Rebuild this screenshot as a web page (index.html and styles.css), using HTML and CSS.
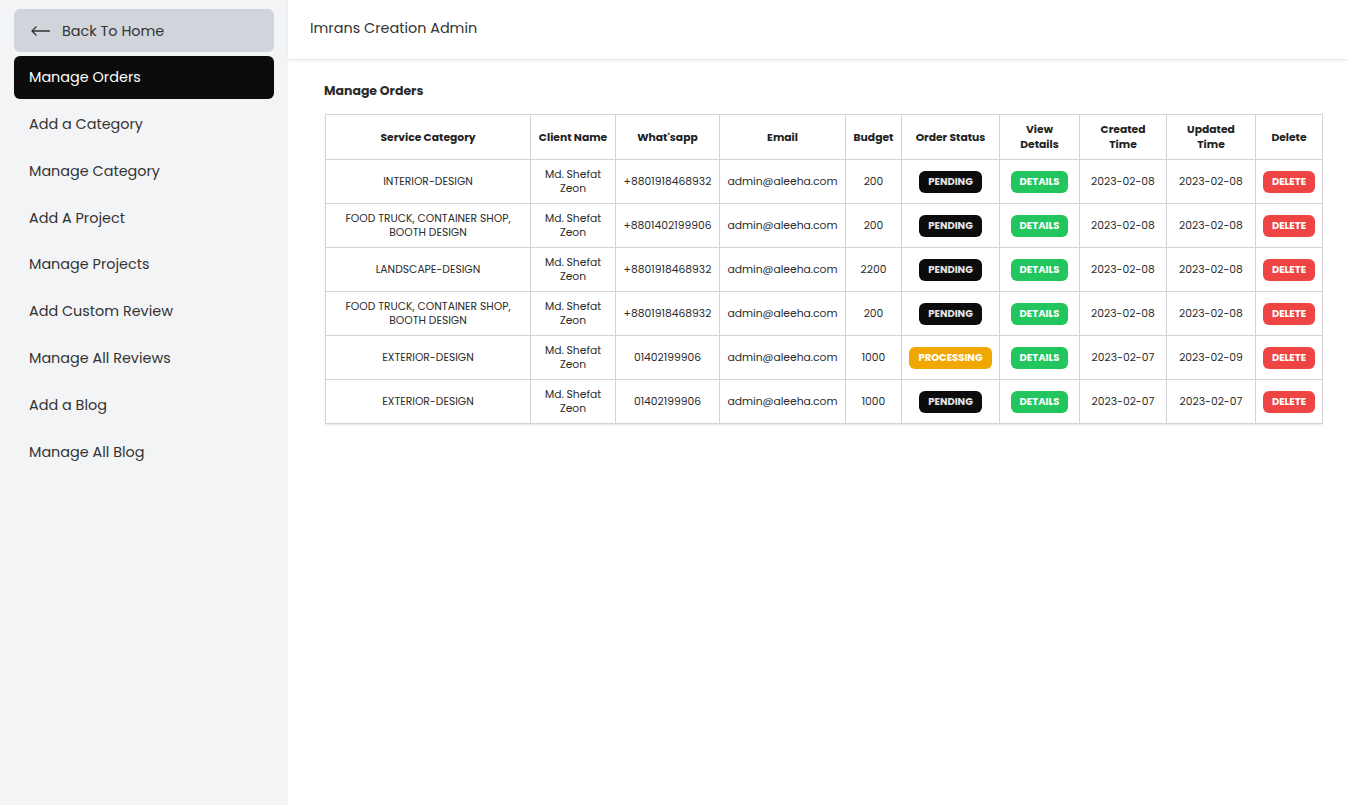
FILE: index.html
```html
<!DOCTYPE html>
<html>
<head>
<meta charset="utf-8">
<title>Imrans Creation Admin</title>
<link rel="stylesheet" href="styles.css">
</head>
<body>
<div class="layout">
  <aside class="sidebar">
    <a class="nav-item back">
      <svg class="back-icon" width="19" height="10" viewBox="0 0 19 10"><path d="M18.5 5H1M5 1L1 5l4 4" fill="none" stroke="#333" stroke-width="1.3" stroke-linecap="round" stroke-linejoin="round"/></svg>
      <span>Back To Home</span>
    </a>
    <a class="nav-item active">Manage Orders</a>
    <a class="nav-item">Add a Category</a>
    <a class="nav-item">Manage Category</a>
    <a class="nav-item">Add A Project</a>
    <a class="nav-item">Manage Projects</a>
    <a class="nav-item">Add Custom Review</a>
    <a class="nav-item">Manage All Reviews</a>
    <a class="nav-item">Add a Blog</a>
    <a class="nav-item">Manage All Blog</a>
  </aside>
  <div class="main">
    <header class="topbar">Imrans Creation Admin</header>
    <section class="content">
      <h2 class="page-title">Manage Orders</h2>
      <div class="table-wrap">
        <table class="orders">
          <thead>
            <tr>
              <th class="c-cat">Service Category</th>
              <th class="c-name">Client Name</th>
              <th class="c-wa">What'sapp</th>
              <th class="c-mail">Email</th>
              <th class="c-bud">Budget</th>
              <th class="c-status">Order Status</th>
              <th class="c-view">View<br>Details</th>
              <th class="c-date">Created<br>Time</th>
              <th class="c-upd">Updated<br>Time</th>
              <th class="c-del">Delete</th>
            </tr>
          </thead>
          <tbody>
            <tr>
              <td>INTERIOR-DESIGN</td>
              <td>Md. Shefat<br>Zeon</td>
              <td>+8801918468932</td>
              <td>admin@aleeha.com</td>
              <td>200</td>
              <td><span class="badge pending">PENDING</span></td>
              <td><span class="badge details">DETAILS</span></td>
              <td>2023-02-08</td>
              <td>2023-02-08</td>
              <td><span class="badge delete">DELETE</span></td>
            </tr>
            <tr>
              <td>FOOD TRUCK, CONTAINER SHOP,<br>BOOTH DESIGN</td>
              <td>Md. Shefat<br>Zeon</td>
              <td>+8801402199906</td>
              <td>admin@aleeha.com</td>
              <td>200</td>
              <td><span class="badge pending">PENDING</span></td>
              <td><span class="badge details">DETAILS</span></td>
              <td>2023-02-08</td>
              <td>2023-02-08</td>
              <td><span class="badge delete">DELETE</span></td>
            </tr>
            <tr>
              <td>LANDSCAPE-DESIGN</td>
              <td>Md. Shefat<br>Zeon</td>
              <td>+8801918468932</td>
              <td>admin@aleeha.com</td>
              <td>2200</td>
              <td><span class="badge pending">PENDING</span></td>
              <td><span class="badge details">DETAILS</span></td>
              <td>2023-02-08</td>
              <td>2023-02-08</td>
              <td><span class="badge delete">DELETE</span></td>
            </tr>
            <tr>
              <td>FOOD TRUCK, CONTAINER SHOP,<br>BOOTH DESIGN</td>
              <td>Md. Shefat<br>Zeon</td>
              <td>+8801918468932</td>
              <td>admin@aleeha.com</td>
              <td>200</td>
              <td><span class="badge pending">PENDING</span></td>
              <td><span class="badge details">DETAILS</span></td>
              <td>2023-02-08</td>
              <td>2023-02-08</td>
              <td><span class="badge delete">DELETE</span></td>
            </tr>
            <tr>
              <td>EXTERIOR-DESIGN</td>
              <td>Md. Shefat<br>Zeon</td>
              <td>01402199906</td>
              <td>admin@aleeha.com</td>
              <td>1000</td>
              <td><span class="badge processing">PROCESSING</span></td>
              <td><span class="badge details">DETAILS</span></td>
              <td>2023-02-07</td>
              <td>2023-02-09</td>
              <td><span class="badge delete">DELETE</span></td>
            </tr>
            <tr>
              <td>EXTERIOR-DESIGN</td>
              <td>Md. Shefat<br>Zeon</td>
              <td>01402199906</td>
              <td>admin@aleeha.com</td>
              <td>1000</td>
              <td><span class="badge pending">PENDING</span></td>
              <td><span class="badge details">DETAILS</span></td>
              <td>2023-02-07</td>
              <td>2023-02-07</td>
              <td><span class="badge delete">DELETE</span></td>
            </tr>
          </tbody>
        </table>
      </div>
    </section>
  </div>
</div>
</body>
</html>
```

FILE: styles.css
```css
* { box-sizing: border-box; }
html, body { margin: 0; padding: 0; }
body {
  font-family: "Poppins", "Open Sans", "Noto Sans", sans-serif;
  color: #2b2b2b;
  background: #ffffff;
}
.layout {
  display: flex;
  min-height: 805px;
}
.sidebar {
  width: 288px;
  flex: 0 0 288px;
  background: #f3f4f6;
  padding: 9px 14px;
  display: flex;
  flex-direction: column;
  gap: 4px;
}
.nav-item {
  height: 42.86px;
  display: flex;
  align-items: center;
  padding-left: 15px;
  font-size: 14.4px;
  color: #333;
  border-radius: 6px;
  text-decoration: none;
}
.nav-item.back {
  background: #d1d5db;
  height: 43px;
  padding-left: 17px;
  padding-top: 1px;
  gap: 12px;
}
.back-icon { display: block; margin-top: -1px; }
.nav-item.active {
  background: #0c0c0c;
  color: #ffffff;
  padding-top: 1px;
}
.main {
  flex: 1;
  display: flex;
  flex-direction: column;
}
.topbar {
  height: 60px;
  padding: 0 22px 2px;
  display: flex;
  align-items: center;
  font-size: 14.4px;
  color: #333;
  border-bottom: 1px solid #e5e7eb;
  box-shadow: 0 1px 3px rgba(0,0,0,0.06);
}
.content {
  padding: 22px 26px 0 36px;
}
.page-title {
  margin: 0 0 14px 0;
  font-size: 12.5px;
  font-weight: 700;
  color: #2b2b2b;
}
.table-wrap {
  width: 997px;
  margin-left: 1px;
  box-shadow: 0 1px 2px rgba(0,0,0,0.12);
  border-radius: 2px;
}
.orders {
  width: 997px;
  border-collapse: collapse;
  table-layout: fixed;
  font-size: 10.75px;
}
.orders th, .orders td {
  border: 1px solid #d4d4d8;
  text-align: center;
  vertical-align: middle;
  padding: 0 6px;
  line-height: 14px;
}
.orders th {
  height: 45px;
  font-weight: 700;
  line-height: 15px;
  color: #222;
}
.orders td {
  height: 44px;
  color: #2b2b2b;
}
.c-cat { width: 205px; }
.c-name { width: 85px; }
.c-wa { width: 104px; }
.c-mail { width: 126px; }
.c-bud { width: 56px; }
.c-status { width: 98px; }
.c-view { width: 80px; }
.c-date { width: 87px; }
.c-upd { width: 89px; }
.c-del { width: 67px; }
.badge {
  display: inline-block;
  font-size: 10px;
  font-weight: 700;
  line-height: 14px;
  padding: 4px 9px;
  border-radius: 6px;
  color: #ffffff;
}
.pending { background: #0c0c0c; color: #e5e5e5; }
.processing { background: #f0a800; }
.details { background: #22c55e; }
.delete { background: #ef4444; }
```
